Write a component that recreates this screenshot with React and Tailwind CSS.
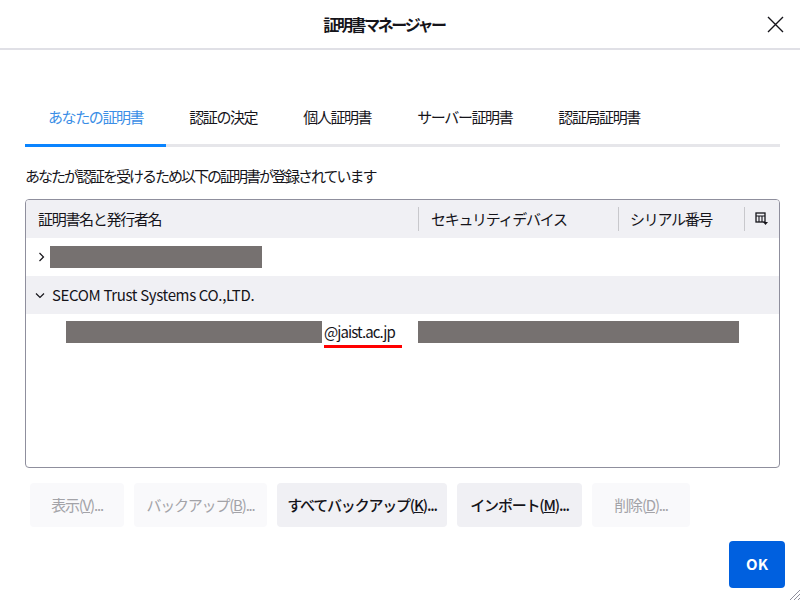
import React from "react";

const font = { fontFamily: '"Noto Sans CJK JP", "Noto Sans", sans-serif' };

function Tab({ label, active }) {
  return (
    <div
      className={
        "h-[57px] px-[23px] flex items-center border-b-[3px] " +
        (active ? "border-[#0a84ff] text-[#3a8ee6]" : "border-transparent text-[#15141a]")
      }
    >
      <span className="text-[15px] tracking-[-1.4px]">{label}</span>
    </div>
  );
}

function Btn({ label, k, rest, disabled, w }) {
  return (
    <div
      className={
        "h-[44px] rounded-[4px] flex items-center justify-center text-[15px] tracking-[-1.2px] " +
        w +
        (disabled ? " bg-[#f9f9fb] text-[#a3a3a8]" : " bg-[#f0f0f4] text-[#15141a] font-medium")
      }
    >
      {label}(<span className="underline">{k}</span>){rest}
    </div>
  );
}

export default function App() {
  return (
    <div className="w-[800px] h-[600px] bg-white relative overflow-hidden text-[#15141a]" style={font}>
      <div className="h-[50px] border-b-2 border-[#e0e0e6] flex items-center justify-center relative pr-[32px]">
        <span className="text-[16px] font-bold tracking-[-2.4px]">証明書マネージャー</span>
        <svg className="absolute right-[16px] top-[16px]" width="17" height="17" viewBox="0 0 17 17">
          <path d="M1 1 L16 16 M16 1 L1 16" stroke="#15141a" strokeWidth="1.4" />
        </svg>
      </div>

      <div className="px-[25px]">
        <div className="mt-[40px] flex border-b-[3px] border-[#e6e6ea] w-[755px]">
          <div className="flex -mb-[3px]">
            <Tab label="あなたの証明書" active />
            <Tab label="認証の決定" />
            <Tab label="個人証明書" />
            <Tab label="サーバー証明書" />
            <Tab label="認証局証明書" />
          </div>
        </div>

        <div className="mt-[17px] h-[24px] flex items-center text-[15px] tracking-[-2px]">
          あなたが認証を受けるため以下の証明書が登録されています
        </div>

        <div className="mt-[11px] w-[755px] h-[269px] border border-[#8f8f9d] rounded-[4px] overflow-hidden text-[15px]">
          <div className="h-[38px] bg-[#f0f0f4] flex items-center tracking-[-1.3px]">
            <div className="w-[392px] pl-[12px]">証明書名と発行者名</div>
            <div className="w-px h-[24px] bg-[#c8c8cc]" />
            <div className="w-[199px] pl-[12px]">セキュリティデバイス</div>
            <div className="w-px h-[24px] bg-[#c8c8cc]" />
            <div className="w-[125px] pl-[11px]">シリアル番号</div>
            <div className="w-px h-[24px] bg-[#c8c8cc]" />
            <div className="flex-1 flex justify-center">
              <svg width="14" height="14" viewBox="0 0 14 14">
                <rect x="1" y="1" width="9" height="9" fill="none" stroke="#15141a" strokeWidth="1.3" />
                <path d="M1 4 H10 M4 4 V10 M7 4 V10" stroke="#15141a" strokeWidth="1.1" />
                <path d="M8 10 H13 L10.5 13 Z" fill="#15141a" />
              </svg>
            </div>
          </div>

          <div className="h-[38px] flex items-center">
            <svg className="ml-[12px]" width="7" height="10" viewBox="0 0 7 10">
              <path d="M1.5 1 L5.5 5 L1.5 9" stroke="#15141a" strokeWidth="1.2" fill="none" />
            </svg>
            <div className="ml-[5px] w-[212px] h-[22px] bg-[#767170]" />
          </div>

          <div className="h-[38px] bg-[#f0f0f4] flex items-center">
            <svg className="ml-[9px]" width="10" height="7" viewBox="0 0 10 7">
              <path d="M1 1.5 L5 5.5 L9 1.5" stroke="#15141a" strokeWidth="1.2" fill="none" />
            </svg>
            <span className="ml-[7px] tracking-[-0.35px]">SECOM Trust Systems CO.,LTD.</span>
          </div>

          <div className="h-[36px] flex items-center">
            <div className="ml-[40px] w-[256px] h-[22px] bg-[#767170]" />
            <div className="ml-[2px] relative tracking-[-0.9px]">
              @jaist.ac.jp
              <div className="absolute left-0 top-[24px] w-[78px] h-[3px] bg-[#ff0000]" />
            </div>
            <div className="ml-[23px] w-[321px] h-[22px] bg-[#767170]" />
          </div>
        </div>

        <div className="mt-[15px] ml-[5px] flex gap-[10px]">
          <Btn label="表示" k="V" rest="..." disabled w="w-[94px]" />
          <Btn label="バックアップ" k="B" rest="..." disabled w="w-[133px]" />
          <Btn label="すべてバックアップ" k="K" rest="..." w="w-[170px]" />
          <Btn label="インポート" k="M" rest="..." w="w-[125px]" />
          <Btn label="削除" k="D" rest="..." disabled w="w-[98px]" />
        </div>

        <div className="mt-[14px] flex justify-end">
          <div className="mr-[-10px] w-[56px] h-[47px] rounded-[4px] bg-[#0060df] text-white font-bold text-[15px] flex items-center justify-center">
            OK
          </div>
        </div>
      </div>
      <svg className="absolute right-0 bottom-0" width="12" height="12" viewBox="0 0 12 12">
        <path d="M12 2 L2 12 M12 6 L6 12 M12 10 L10 12" stroke="#8f8f9d" strokeWidth="1" />
      </svg>
    </div>
  );
}
